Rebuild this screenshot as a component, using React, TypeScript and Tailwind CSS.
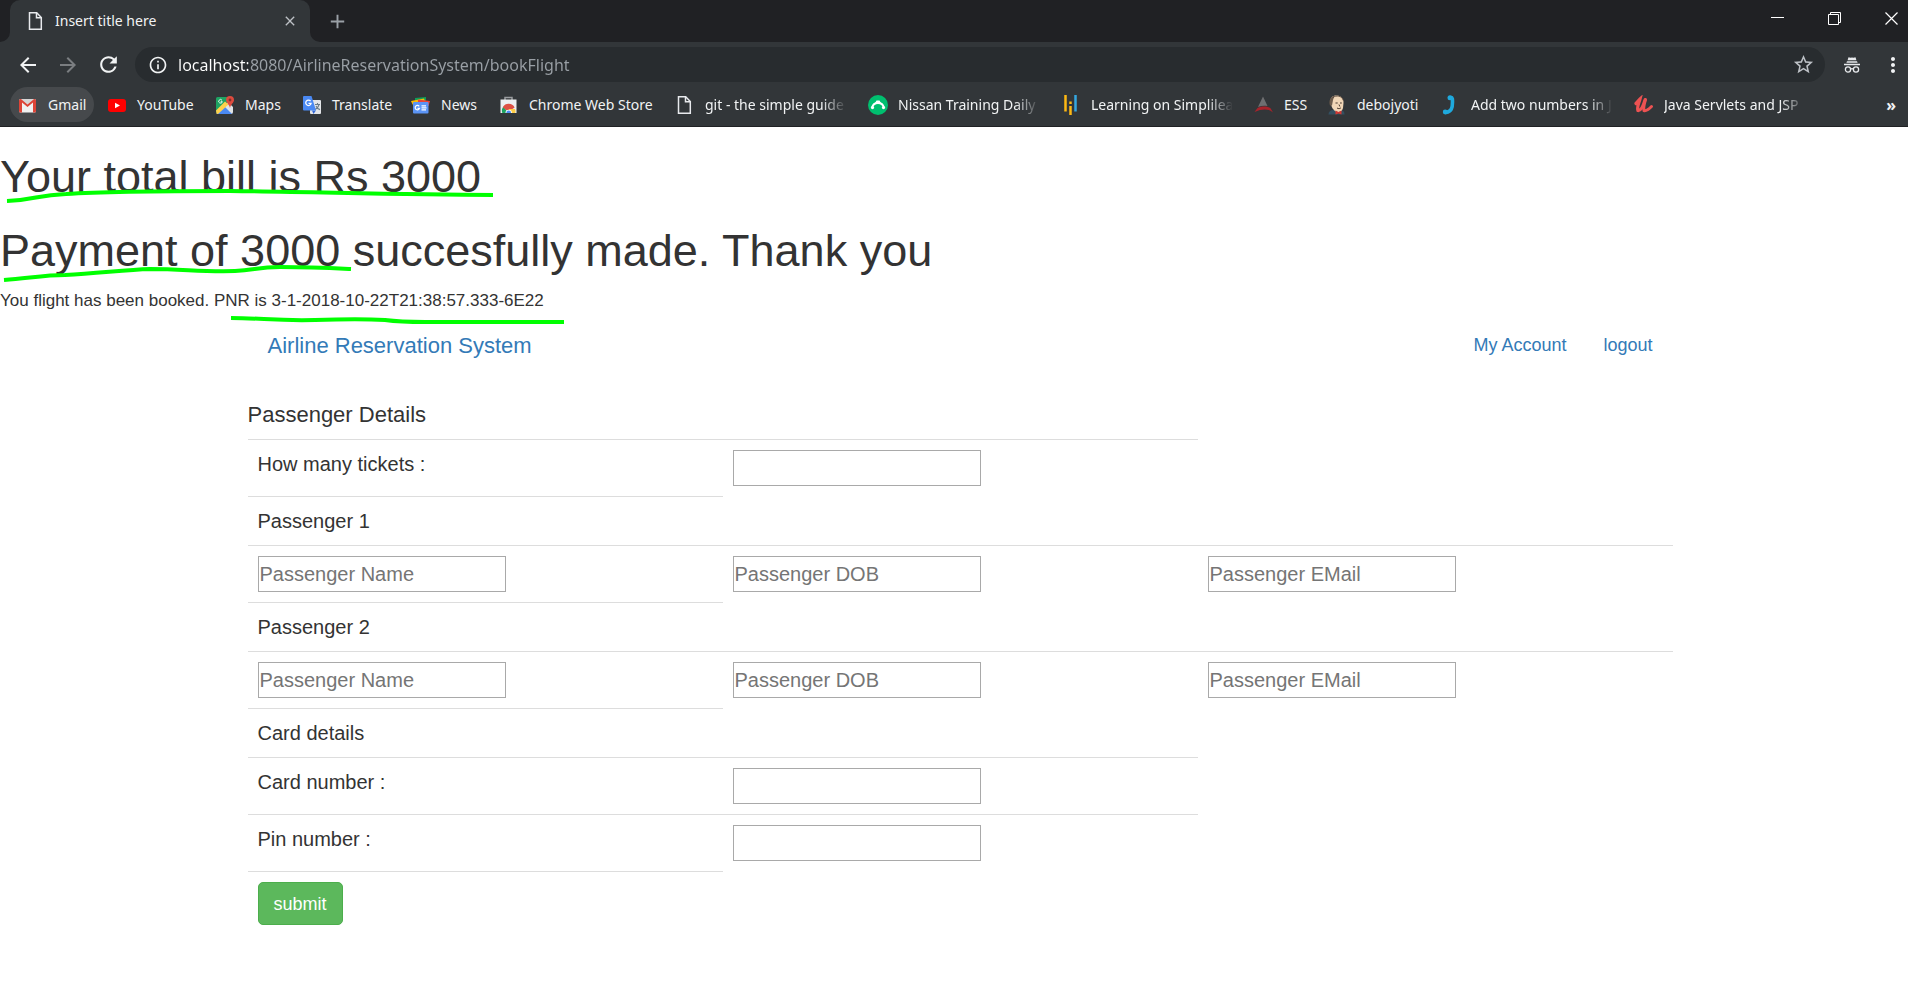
import type { ReactNode } from "react";
import {
  MdAdd,
  MdArrowBack,
  MdArrowForward,
  MdClose,
  MdInfoOutline,
  MdMoreVert,
  MdRefresh,
  MdStarBorder,
} from "react-icons/md";

function PageIcon() {
  return (
    <svg viewBox="0 0 20 20" className="size-5 shrink-0" fill="none" stroke="#e8eaed" strokeWidth="1.5" aria-hidden="true">
      <path d="M3.5 1.800h7.200l4.600 4.700v11.700H3.500z" />
      <path d="M10.500 1.800v5h4.800" />
    </svg>
  );
}

function GmailIcon() {
  return (
    <svg viewBox="0 0 20 20" className="size-5 shrink-0" aria-hidden="true">
      <rect x="1" y="4" width="17" height="13.500" rx="1.500" fill="#f1f1f1" />
      <path d="M3 4h13L9.500 9.500z" fill="#d5d5d5" />
      <path d="M1 5.500V16a1.500 1.500 0 0 0 1.500 1.500H4V7.500l5.500 4.500L15 7.500v10h1.500A1.500 1.500 0 0 0 18 16V5.500A1.500 1.500 0 0 0 16.500 4H16L9.500 9.500 3 4h-.5A1.500 1.500 0 0 0 1 5.500z" fill="#dc4437" />
    </svg>
  );
}

function YouTubeIcon() {
  return (
    <svg viewBox="0 0 20 20" className="size-5 shrink-0" aria-hidden="true">
      <rect x="1" y="4" width="18" height="13" rx="3" fill="#ff0000" />
      <path d="M8 7.700v5.600l5-2.800z" fill="#fff" />
    </svg>
  );
}

function MapsIcon() {
  return (
    <svg viewBox="0 0 20 20" className="size-5 shrink-0" aria-hidden="true">
      <path d="M1 3.500A1.500 1.500 0 0 1 2.500 2H13v7L1 18z" fill="#1ea362" />
      <path d="M1.500 18.500L13 7l5 5v5a2 2 0 0 1-2 2H2z" fill="#dfe3e6" />
      <path d="M2 19l7.500-7.500L17 19z" fill="#4a89f3" />
      <path d="M1 15.500l9-9 3.500 3-10.500 9.500-1.500-.5z" fill="#ffd04b" />
      <path d="M7 5.300a1.800 1.800 0 1 0 .3 1.400H5.700" fill="none" stroke="#fff" strokeWidth=".9" />
      <path d="M15 1a4 4 0 0 0-4 4c0 2.800 3.200 4 4 8 .8-4 4-5.200 4-8a4 4 0 0 0-4-4z" fill="#dd4b3e" />
      <circle cx="15" cy="5" r="1.400" fill="#822f2b" />
    </svg>
  );
}

function TranslateIcon() {
  return (
    <svg viewBox="0 0 20 20" className="size-5 shrink-0" aria-hidden="true">
      <rect x="8" y="5" width="11" height="14" rx="1" fill="#e3e5e8" />
      <path d="M13 9.500h5M15.500 8v1.500M17 9.500c-.5 2.500-2 4-4 5M14 11c.8 1.800 2 3 4 3.600" fill="none" stroke="#6b7c88" strokeWidth="1.100" />
      <path d="M10 15.500h4L11.500 19z" fill="#3367d6" />
      <path d="M2 1h7.500L14 15.500H2a1 1 0 0 1-1-1V2a1 1 0 0 1 1-1z" fill="#4a89f3" />
      <path d="M8.600 6.200a2.700 2.700 0 1 0 .5 2.200H6.500" fill="none" stroke="#fff" strokeWidth="1.300" />
    </svg>
  );
}

function NewsIcon() {
  return (
    <svg viewBox="0 0 20 20" className="size-5 shrink-0" aria-hidden="true">
      <path d="M4 3l11-1v6H4z" fill="#0f9d58" />
      <path d="M0 6L13 3.500l2 6H1.500z" fill="#fbbc04" />
      <path d="M7 4.500l12 1.500-1.500 5H7z" fill="#ea4335" />
      <rect x="2" y="7" width="15.500" height="11.500" rx="1" fill="#5b94f5" />
      <path d="M8.200 11.300a2.200 2.200 0 1 0 .3 2H6.500" fill="none" stroke="#fff" strokeWidth="1.300" />
      <path d="M10.500 10.800H15M10.500 12.800h5M10.500 14.800H15" stroke="#fff" strokeWidth="1.200" />
    </svg>
  );
}

function WebStoreIcon() {
  return (
    <svg viewBox="0 0 20 20" className="size-5 shrink-0" aria-hidden="true">
      <path d="M6 5V2.500h7V5" fill="none" stroke="#9a9da0" strokeWidth="1.500" />
      <path d="M1.500 4.500h16v13.500h-16z" fill="#eceff1" />
      <path d="M3.300 18a6.500 6.500 0 0 1 1.200-6.500l3 4V18z" fill="#1da462" />
      <path d="M3.800 12.200a6.700 6.700 0 0 1 11.800.3L12 15H7.200z" fill="#dd5144" />
      <path d="M10 14h6a6 6 0 0 1 .3 4H9z" fill="#ffcd46" />
      <path d="M6.500 18a3.200 3.200 0 1 1 6.400 0z" fill="#fff" />
      <path d="M7.300 18a2.400 2.400 0 1 1 4.800 0z" fill="#4b8bf4" />
    </svg>
  );
}

function SurveyIcon() {
  return (
    <svg viewBox="0 0 20 20" className="size-5 shrink-0" aria-hidden="true">
      <circle cx="10" cy="10" r="10" fill="#00bf6f" />
      <path d="M4.200 12.500C5.500 6.500 14.500 6.500 15.800 12.500" fill="none" stroke="#fff" strokeWidth="2" />
      <path d="M7 8l1.500-2.500h3L13 8z" fill="#fff" />
      <circle cx="4.500" cy="12.600" r="1.600" fill="#fff" />
      <circle cx="15.500" cy="12.600" r="1.600" fill="#fff" />
    </svg>
  );
}

function SimplilearnIcon() {
  return (
    <svg viewBox="0 0 20 20" className="size-5 shrink-0" aria-hidden="true">
      <path d="M4.500 0v16.500M9.500 11v9M9.500 6.500V9" stroke="#fdb813" strokeWidth="2.500" />
      <path d="M14.500 0v16.500" stroke="#35a7e0" strokeWidth="2.500" />
    </svg>
  );
}

function EssIcon() {
  return (
    <svg viewBox="0 0 20 20" className="size-5 shrink-0" aria-hidden="true">
      <path d="M9 1.500l4.500 9.500c-3-.7-6.500-.4-9.500 1z" fill="#6e6f71" />
      <path d="M3.500 13c5-2.300 10.500-1.700 13 .2L19 17.500c-3-3.300-10-4.500-18.500-.5z" fill="#a8232b" />
    </svg>
  );
}

function JenkinsIcon() {
  return (
    <svg viewBox="0 0 20 20" className="size-5 shrink-0" aria-hidden="true">
      <path d="M1.500 19.500c0-3 2-4.500 5-4.500h7.500c2.500.5 3.500 2 3.500 4.500z" fill="#335061" />
      <path d="M3.500 8C2.500 3 5.500.5 9.500.5S17 3 16.500 8l-.5 5c-.5 2.500-2.500 4.500-5.500 4S5 13 4.500 11z" fill="#f0d6b7" />
      <path d="M3 10.500C1.500 5.500 3.500 2 7.500.8L6 5l-1 5.500z" fill="#6d5c4c" />
      <path d="M6 2.500c3-2.500 9-2 10.300 3" fill="none" stroke="#49392f" strokeWidth=".8" />
      <path d="M8.500 8h2.200M13 8h1.800M10 13c1.500 1 3 .8 4-.3M12 9.500l.8 2" fill="none" stroke="#49392f" strokeWidth="1" />
      <path d="M8.500 15.500l3 1.500 3-1.500v4l-3-1-3 1z" fill="#d33833" />
    </svg>
  );
}

function HookIcon() {
  return (
    <svg viewBox="0 0 20 20" className="size-5 shrink-0" fill="none" stroke="#1fa9dd" aria-hidden="true">
      <path d="M10 2.500c1.500 0 1.500 1.500 1.500 4.500 0 6-1 9.500-6.500 10.500" strokeWidth="3.600" strokeLinecap="round" />
      <circle cx="9" cy="2.800" r="2.500" fill="#1fa9dd" stroke="none" />
      <circle cx="4.200" cy="17" r="2.400" fill="#1fa9dd" stroke="none" />
    </svg>
  );
}

function UdemyIcon() {
  return (
    <svg viewBox="0 0 20 20" className="size-5 shrink-0" fill="none" stroke="#ec5252" strokeLinecap="round" aria-hidden="true">
      <path d="M2 8.500c1.500-1.500 2.300-3 4-4.500-1 4-3.500 8-2 11.500 3 .5 5.500-5.500 7-10.500" strokeWidth="3.200" />
      <path d="M11.500 4.500c-1 4-2.500 8-1.500 11 2.500 1 5-1.500 7.500-4" strokeWidth="3" />
    </svg>
  );
}

function IncognitoIcon() {
  return (
    <svg viewBox="0 0 18 18" className="size-[18px]" aria-hidden="true">
      <path d="M5.500 1.200l2 .6 1.500-.4 1.500.4 2-.6.900 3H4.600z" fill="#e8eaed" />
      <path d="M4 5.300h10l.6 1.500H3.400zM1 7.800h16v1.400H1z" fill="#e8eaed" />
      <circle cx="5" cy="13.500" r="2.600" fill="none" stroke="#e8eaed" strokeWidth="1.300" />
      <circle cx="13" cy="13.500" r="2.600" fill="none" stroke="#e8eaed" strokeWidth="1.300" />
      <path d="M7.500 13.200c1-.8 2-.8 3 0" fill="none" stroke="#e8eaed" strokeWidth="1.200" />
    </svg>
  );
}

type Bookmark = { label: string; icon: ReactNode; width: string; active?: boolean; fade?: boolean };

const bookmarks: Bookmark[] = [
  { label: "Gmail", icon: <GmailIcon />, width: "w-[38px]", active: true },
  { label: "YouTube", icon: <YouTubeIcon />, width: "w-[57px]" },
  { label: "Maps", icon: <MapsIcon />, width: "w-[36px]" },
  { label: "Translate", icon: <TranslateIcon />, width: "w-[58px]" },
  { label: "News", icon: <NewsIcon />, width: "w-[37px]" },
  { label: "Chrome Web Store", icon: <WebStoreIcon />, width: "w-[125px]" },
  { label: "git - the simple guide", icon: <PageIcon />, width: "w-[142px]", fade: true },
  { label: "Nissan Training Daily", icon: <SurveyIcon />, width: "w-[142px]", fade: true },
  { label: "Learning on Simplilea", icon: <SimplilearnIcon />, width: "w-[142px]", fade: true },
  { label: "ESS", icon: <EssIcon />, width: "w-[22px]" },
  { label: "debojyoti", icon: <JenkinsIcon />, width: "w-[63px]" },
  { label: "Add two numbers in J", icon: <HookIcon />, width: "w-[142px]", fade: true },
  { label: "Java Servlets and JSP", icon: <UdemyIcon />, width: "w-[142px]", fade: true },
];

function TabStrip() {
  return (
    <div className="flex h-[42px] items-stretch bg-[#202124] pl-[10px]">
      <div className="relative flex w-[300px] items-center rounded-t-[10px] bg-[#323639] pr-3 pl-4">
        <svg viewBox="0 0 10 10" className="absolute bottom-0 -left-[10px] size-[10px]" aria-hidden="true">
          <path d="M10 0v10H0A10 10 0 0 0 10 0z" fill="#323639" />
        </svg>
        <svg viewBox="0 0 10 10" className="absolute -right-[10px] bottom-0 size-[10px]" aria-hidden="true">
          <path d="M0 0v10h10A10 10 0 0 1 0 0z" fill="#323639" />
        </svg>
        <PageIcon />
        <span className="ml-[9px] flex-1 text-sm text-[#f1f3f4]">Insert title here</span>
        <button type="button" aria-label="Close tab" className="text-[#bdc1c6]">
          <MdClose size={16} />
        </button>
      </div>
      <button type="button" aria-label="New tab" className="ml-4 text-[#9aa0a6]">
        <MdAdd size={23} />
      </button>
      <div className="ml-auto flex h-9 items-center gap-[44px] pr-[10px]">
        <button type="button" aria-label="Minimize">
          <svg viewBox="0 0 13 13" className="size-[13px]" stroke="#fff" aria-hidden="true">
            <path d="M0 5.500h13" />
          </svg>
        </button>
        <button type="button" aria-label="Restore">
          <svg viewBox="0 0 13 13" className="size-[13px]" stroke="#fff" fill="none" aria-hidden="true">
            <path d="M.5 2.500h10v10H.5zM2.500 2.500V.5h10v10h-2" />
          </svg>
        </button>
        <button type="button" aria-label="Close window">
          <svg viewBox="0 0 13 13" className="size-[13px]" stroke="#fff" strokeWidth="1.200" aria-hidden="true">
            <path d="M.5.5l12 12M12.500.5l-12 12" />
          </svg>
        </button>
      </div>
    </div>
  );
}

function Toolbar() {
  return (
    <div className="flex h-[45px] items-center bg-[#323639] pr-[3px] pl-4 text-[#f1f3f4]">
      <div className="flex w-[119px] items-center gap-4">
        <button type="button" aria-label="Back">
          <MdArrowBack size={24} />
        </button>
        <button type="button" aria-label="Forward" className="text-[#7b7e81]">
          <MdArrowForward size={24} />
        </button>
        <button type="button" aria-label="Reload">
          <MdRefresh size={25} />
        </button>
      </div>
      <div className="flex h-[35px] flex-1 items-center rounded-full bg-[#282c2f] pr-[10px] pl-[13px]">
        <MdInfoOutline size={20} />
        <input
          aria-label="Address"
          defaultValue="localhost:8080/AirlineReservationSystem/bookFlight"
          className="ml-[10px] flex-1 bg-[linear-gradient(to_right,#ffffff_70px,#9aa0a6_70px)] bg-clip-text text-base text-transparent caret-white outline-none"
        />
        <button type="button" aria-label="Bookmark this page" className="text-[#bdc1c6]">
          <MdStarBorder size={23} />
        </button>
      </div>
      <div className="flex items-center gap-5 pl-[18px]">
        <IncognitoIcon />
        <button type="button" aria-label="Menu">
          <MdMoreVert size={24} />
        </button>
      </div>
    </div>
  );
}

function BookmarksBar() {
  return (
    <nav aria-label="Bookmarks" className="flex h-10 items-start border-b border-[#202124] bg-[#323639] pr-3 pl-[10px]">
      {bookmarks.map((b) => (
        <a
          key={b.label}
          href="#"
          className={
            b.active
              ? "mr-0.5 flex h-[35px] items-center gap-[10px] rounded-full bg-[#46494c] pr-2 pl-2 text-sm text-[#f1f3f4]"
              : "flex h-[35px] items-center gap-[10px] pr-[10px] pl-[11px] text-sm text-[#f1f3f4]"
          }
        >
          {b.icon}
          <span
            className={
              b.fade
                ? `${b.width} whitespace-nowrap [mask-image:linear-gradient(to_right,#000_82%,transparent)]`
                : `${b.width} whitespace-nowrap`
            }
          >
            {b.label}
          </span>
        </a>
      ))}
      <button type="button" aria-label="More bookmarks" className="ml-auto h-[35px] text-base leading-[30px] font-bold text-[#f1f3f4]">
        »
      </button>
    </nav>
  );
}

function Field({ label, placeholder }: { label: string; placeholder?: string }) {
  return (
    <input
      type="text"
      aria-label={label}
      placeholder={placeholder}
      className="block h-9 w-[248px] border border-[#a9a9a9] bg-white px-px text-xl placeholder:text-[#757575]"
    />
  );
}

const cell = "border-t border-[#dddddd] p-[10px] text-left align-top font-normal";

function LabelRow({ text, label }: { text: string; label: string }) {
  return (
    <tr>
      <td className={cell}>{text}</td>
      <td className={cell}>
        <Field label={label} />
      </td>
    </tr>
  );
}

function TitleRow({ text }: { text: string }) {
  return (
    <tr>
      <td className={cell}>{text}</td>
    </tr>
  );
}

function PassengerRow({ n }: { n: number }) {
  return (
    <tr>
      {["Passenger Name", "Passenger DOB", "Passenger EMail"].map((p) => (
        <td key={p} className={cell}>
          <Field label={`${p} ${n}`} placeholder={p} />
        </td>
      ))}
    </tr>
  );
}

function Highlights() {
  return (
    <svg
      width="600"
      height="220"
      viewBox="0 127 600 220"
      className="pointer-events-none absolute top-0 left-0"
      fill="none"
      stroke="#00ff00"
      strokeWidth="4"
      aria-hidden="true"
    >
      <path d="M7 201C36 200 36 195 66 194C110 191 160 191 230 191C320 192 400 195 493 195" />
      <path d="M4 280C30 278 45 275 65 275C100 273 125 270 150 269C185 269 200 272 235 271C255 270 258 267 280 267C310 267 330 268 351 269" />
      <path d="M231 318C262 318 275 321 315 320C350 319 365 319 385 320C400 322 410 322 425 322H564" />
    </svg>
  );
}

export default function App() {
  return (
    <div className="min-h-screen bg-white text-[#333333]">
      <header className="font-['Noto_Sans',sans-serif]">
        <TabStrip />
        <Toolbar />
        <BookmarksBar />
      </header>
      <main className="relative pt-[25px] font-['Liberation_Sans',Arial,sans-serif]">
        <h1 className="mb-6 text-[45px] leading-[50px]">Your total bill is Rs 3000</h1>
        <h1 className="mb-3 text-[45px] leading-[50px]">Payment of 3000 succesfully made. Thank you</h1>
        <p className="text-[17px] leading-[25px]">You flight has been booked. PNR is 3-1-2018-10-22T21:38:57.333-6E22</p>
        <Highlights />
        <div className="pl-3">
          <div className="mx-auto max-w-[1425px]">
            <nav aria-label="Main" className="mb-[25px] flex h-16 items-center justify-between px-5 text-[#337ab7]">
              <a href="#" className="text-[22px]">
                Airline Reservation System
              </a>
              <div className="flex gap-[37px] text-lg">
                <a href="#">My Account</a>
                <a href="#">logout</a>
              </div>
            </nav>
            <form onSubmit={(e) => e.preventDefault()}>
              <h4 className="mb-3 text-[22px] leading-[25px]">Passenger Details</h4>
              <table className="w-full table-fixed border-separate border-spacing-0 text-xl leading-7">
                <colgroup>
                  <col />
                  <col />
                  <col />
                </colgroup>
                <tbody>
                  <LabelRow text="How many tickets :" label="How many tickets" />
                  <TitleRow text="Passenger 1" />
                  <PassengerRow n={1} />
                  <TitleRow text="Passenger 2" />
                  <PassengerRow n={2} />
                  <TitleRow text="Card details" />
                  <LabelRow text="Card number :" label="Card number" />
                  <LabelRow text="Pin number :" label="Pin number" />
                  <tr>
                    <td className={cell}>
                      <button
                        type="submit"
                        className="block h-[43px] rounded-[5px] border border-[#4cae4c] bg-[#5cb85c] px-[15px] text-lg leading-6 text-white"
                      >
                        submit
                      </button>
                    </td>
                  </tr>
                </tbody>
              </table>
            </form>
          </div>
        </div>
      </main>
    </div>
  );
}
